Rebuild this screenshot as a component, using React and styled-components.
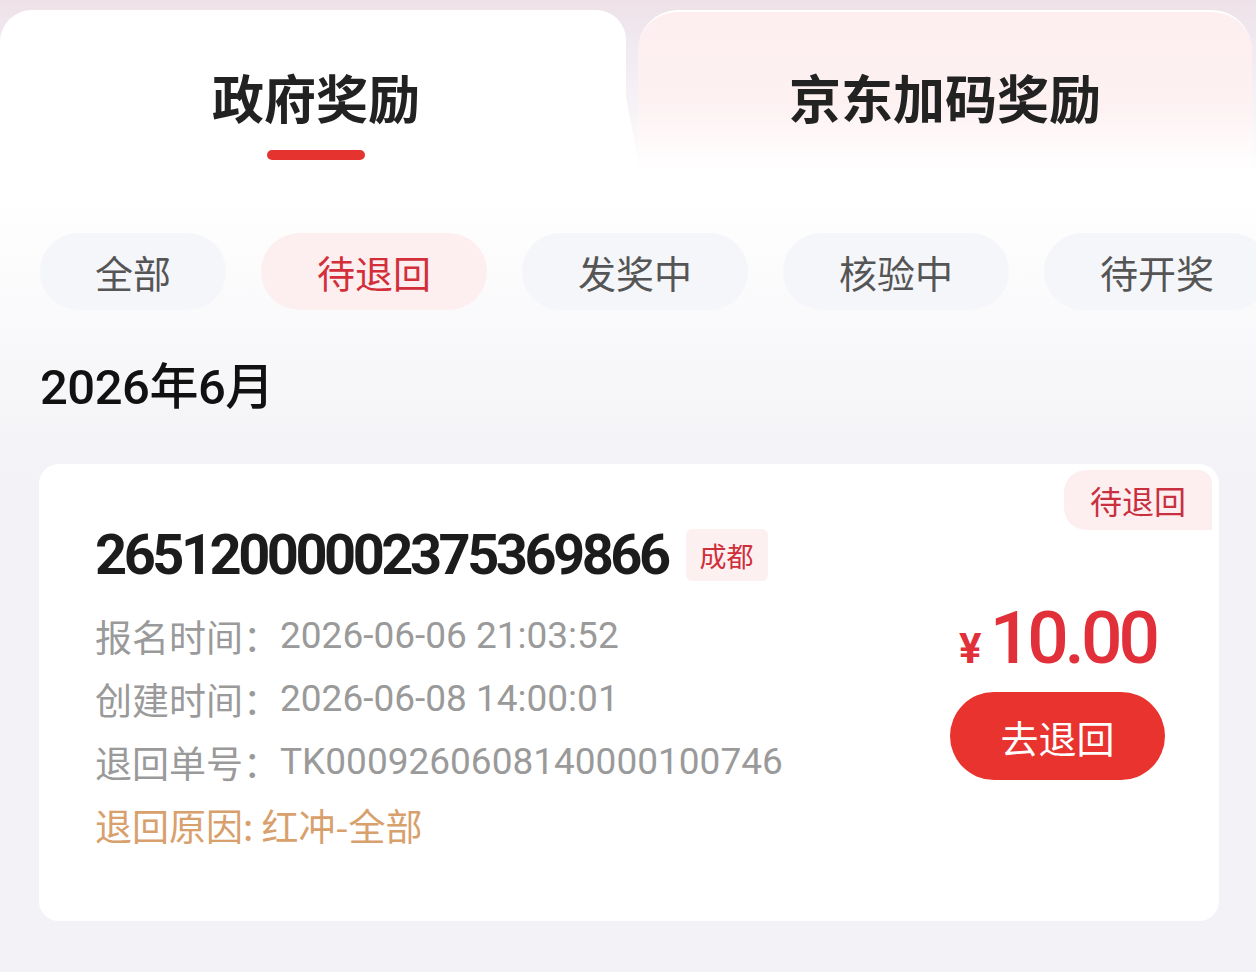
import React from "react";
import styled, { createGlobalStyle } from "styled-components";

const GlobalStyle = createGlobalStyle`
  html, body { margin: 0; padding: 0; }
  body {
    font-family: "Noto Sans CJK SC", "Noto Sans", sans-serif;
    background: #f3f3f7;
    -webkit-font-smoothing: antialiased;
  }
`;

const Page = styled.div`
  width: 1256px;
  height: 972px;
  overflow: hidden;
  background: linear-gradient(to bottom, #ffffff 190px, #f9f9fb 330px, #f3f3f7 470px);
`;

const Header = styled.div`
  height: 190px;
  padding-top: 10px;
  box-sizing: border-box;
  display: flex;
  background: linear-gradient(to bottom, #efe1e8 0px, #f0e9f0 40px, #f6f3f7 110px, #ffffff 175px);
`;

const LeftTab = styled.div`
  position: relative;
  flex: 0 0 626px;
  display: flex;
  flex-direction: column;
  align-items: center;
  padding: 57px 0 0 6px;
  box-sizing: border-box;
  background: #fff;
  border-top-left-radius: 32px;
  border-top-right-radius: 30px;
  z-index: 1;
  &::after {
    content: "";
    position: absolute;
    top: 0;
    right: -18px;
    width: 80px;
    height: 100%;
    background: #fff;
    border-top-right-radius: 34px;
    transform: skewX(11deg);
    transform-origin: bottom;
    z-index: -1;
  }
`;

const RightTab = styled.div`
  flex: 0 0 614px;
  margin-left: 12px;
  display: flex;
  flex-direction: column;
  align-items: center;
  padding-top: 55px;
  box-sizing: border-box;
  border-top: 2px solid rgba(255, 255, 255, 0.9);
  border-radius: 40px 40px 0 0;
  background: linear-gradient(to bottom, #fdeef0 0px, #fdf1f2 90px, #ffffff 160px);
`;

const TabTitle = styled.div`
  font-size: 52px;
  line-height: 60px;
  font-weight: 700;
  color: #222;
  position: relative;
  z-index: 2;
`;

const Underline = styled.div`
  width: 98px;
  height: 10px;
  margin-top: 23px;
  border-radius: 5px;
  background: #e5332f;
  position: relative;
  z-index: 2;
`;

const Filters = styled.div`
  display: flex;
  gap: 35px;
  padding: 43px 0 0 40px;
  overflow: hidden;
  white-space: nowrap;
`;

const Pill = styled.div`
  flex: 0 0 auto;
  height: 77px;
  padding: 0 ${(p) => (p.$short ? "55px" : "56px")};
  border-radius: 39px;
  display: flex;
  align-items: center;
  justify-content: center;
  font-size: 38px;
  color: ${(p) => (p.$active ? "#d32f3a" : "#555")};
  background: ${(p) => (p.$active ? "#fdeff0" : "#f5f6fa")};
`;

const MonthTitle = styled.div`
  margin: 53px 0 0 40px;
  font-family: Roboto, "Noto Sans CJK SC", sans-serif;
  font-size: 49px;
  line-height: 50px;
  font-weight: 500;
  color: #111;
  letter-spacing: -0.5px;
`;

const Card = styled.div`
  position: relative;
  margin: 51px 37px 0 39px;
  height: 457px;
  box-sizing: border-box;
  background: #fff;
  border-radius: 20px;
  display: flex;
  justify-content: space-between;
`;

const StatusBadge = styled.div`
  position: absolute;
  top: 6px;
  right: 7px;
  width: 148px;
  height: 60px;
  display: flex;
  align-items: center;
  justify-content: center;
  font-size: 32px;
  color: #c9303f;
  background: #fdeeef;
  border-radius: 22px 14px 0 22px;
`;

const InfoCol = styled.div`
  padding: 61px 0 0 56px;
  display: flex;
  flex-direction: column;
`;

const OrderRow = styled.div`
  display: flex;
  align-items: center;
  height: 60px;
  margin-bottom: 19px;
`;

const OrderNo = styled.div`
  font-family: Roboto, sans-serif;
  font-size: 56px;
  font-weight: 700;
  letter-spacing: -3.5px;
  color: #1c1c1c;
  line-height: 60px;
`;

const CityTag = styled.div`
  margin-left: 18px;
  height: 52px;
  padding: 0 14px;
  display: flex;
  align-items: center;
  font-size: 27px;
  color: #cf2f3a;
  background: #fdf0f0;
  border-radius: 6px;
`;

const InfoRow = styled.div`
  display: flex;
  align-items: center;
  height: 63px;
  font-size: 37px;
  color: ${(p) => (p.$accent ? "#d8a06c" : "#9a9a9a")};
  white-space: nowrap;
`;

const Value = styled.span`
  font-family: Roboto, "Noto Sans CJK SC", sans-serif;
`;

const ActionCol = styled.div`
  padding: 134px 54px 0 0;
  display: flex;
  flex-direction: column;
  align-items: center;
`;

const Amount = styled.div`
  display: flex;
  align-items: baseline;
  font-family: Roboto, sans-serif;
  color: #e1303a;
  height: 80px;
  line-height: 80px;
`;

const Yen = styled.span`
  font-size: 42px;
  font-weight: 700;
  margin-right: 8px;
`;

const Num = styled.span`
  font-size: 73px;
  font-weight: 500;
  letter-spacing: -4px;
`;

const ReturnButton = styled.button`
  margin-top: 14px;
  width: 215px;
  height: 88px;
  border: none;
  border-radius: 44px;
  background: #e8332f;
  color: #fff;
  font-family: "Noto Sans CJK SC", sans-serif;
  font-size: 38px;
  display: flex;
  align-items: center;
  justify-content: center;
  padding: 0;
`;

const filters = [
  { label: "全部", short: true },
  { label: "待退回", active: true },
  { label: "发奖中" },
  { label: "核验中" },
  { label: "待开奖" },
];

export default function App() {
  return (
    <>
      <GlobalStyle />
      <Page>
        <Header>
          <LeftTab>
            <TabTitle>政府奖励</TabTitle>
            <Underline />
          </LeftTab>
          <RightTab>
            <TabTitle>京东加码奖励</TabTitle>
          </RightTab>
        </Header>
        <Filters>
          {filters.map((f) => (
            <Pill key={f.label} $active={f.active} $short={f.short}>
              {f.label}
            </Pill>
          ))}
        </Filters>
        <MonthTitle>2026年6月</MonthTitle>
        <Card>
          <StatusBadge>待退回</StatusBadge>
          <InfoCol>
            <OrderRow>
              <OrderNo>26512000002375369866</OrderNo>
              <CityTag>成都</CityTag>
            </OrderRow>
            <InfoRow>
              报名时间：<Value>2026-06-06 21:03:52</Value>
            </InfoRow>
            <InfoRow>
              创建时间：<Value>2026-06-08 14:00:01</Value>
            </InfoRow>
            <InfoRow>
              退回单号：<Value>TK0009260608140000100746</Value>
            </InfoRow>
            <InfoRow $accent>退回原因: 红冲-全部</InfoRow>
          </InfoCol>
          <ActionCol>
            <Amount>
              <Yen>¥</Yen>
              <Num>10.00</Num>
            </Amount>
            <ReturnButton>去退回</ReturnButton>
          </ActionCol>
        </Card>
      </Page>
    </>
  );
}
